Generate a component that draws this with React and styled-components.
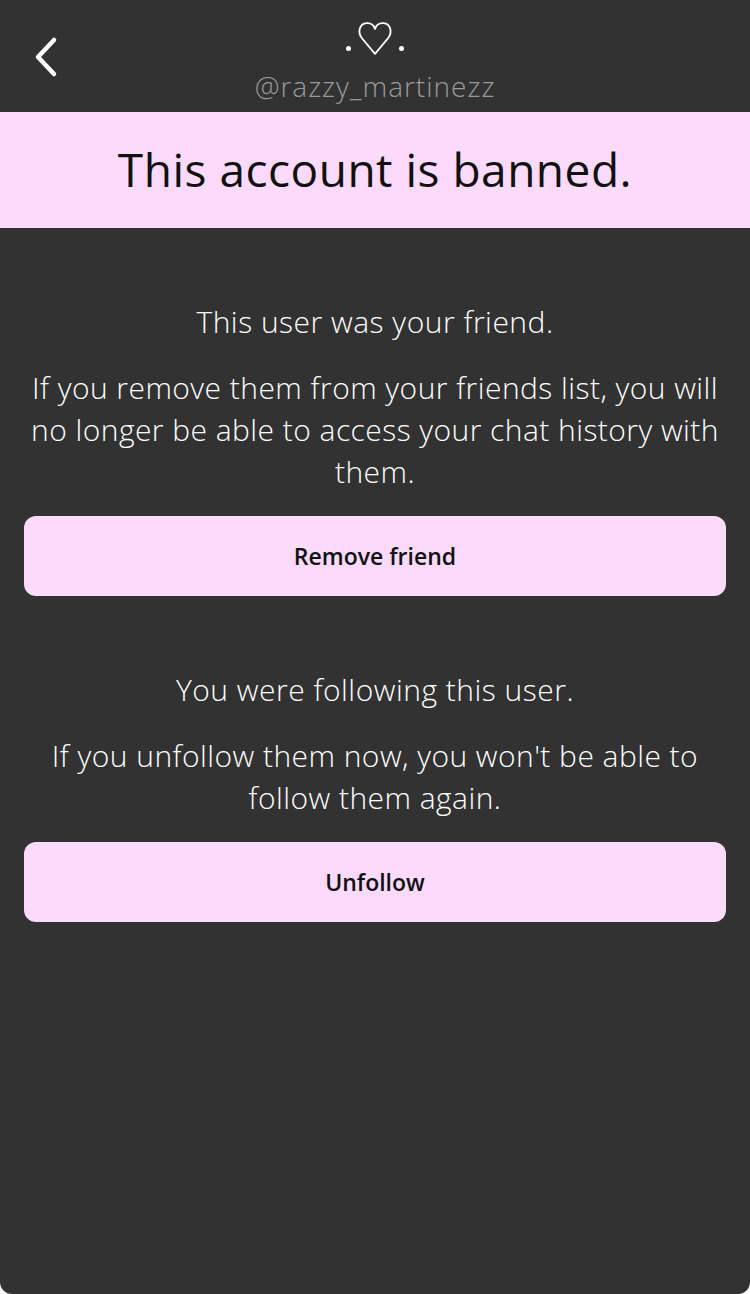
import styled, { createGlobalStyle } from "styled-components";

const GlobalStyle = createGlobalStyle`
  html, body {
    margin: 0;
    padding: 0;
    background: #ffffff;
  }
  * {
    box-sizing: border-box;
  }
`;

const Screen = styled.div`
  width: 750px;
  min-height: 1294px;
  background: #323232;
  border-radius: 0 0 12px 12px;
  font-family: "Open Sans", "Noto Sans", sans-serif;
  display: flex;
  flex-direction: column;
`;

const Header = styled.header`
  position: relative;
  height: 112px;
  display: flex;
  flex-direction: column;
  align-items: center;
  padding-top: 18px;
`;

const BackButton = styled.button`
  position: absolute;
  left: 26px;
  top: 33px;
  width: 40px;
  height: 48px;
  padding: 0;
  border: none;
  background: none;
  display: flex;
  align-items: center;
  justify-content: center;
  cursor: pointer;
`;

const Logo = styled.div`
  display: flex;
  align-items: flex-end;
  gap: 6px;
  height: 38px;
  color: #ffffff;
`;

const Dot = styled.span`
  width: 5px;
  height: 5px;
  border-radius: 50%;
  background: #ffffff;
  margin-bottom: 5px;
`;

const Username = styled.div`
  font-size: 28px;
  font-weight: 300;
  letter-spacing: 1px;
  color: #9a9a9a;
  line-height: 36px;
  margin-top: 12px;
`;

const Banner = styled.div`
  height: 116px;
  background: #fbdafc;
  display: flex;
  align-items: center;
  justify-content: center;
  font-size: 46px;
  letter-spacing: 0.5px;
  color: #111111;
  padding-bottom: 2px;
`;

const Content = styled.main`
  padding: 0 24px;
  display: flex;
  flex-direction: column;
`;

const Section = styled.section`
  padding-top: 73px;
  display: flex;
  flex-direction: column;
  align-items: center;
`;

const Title = styled.p`
  margin: 0;
  font-size: 30px;
  font-weight: 300;
  letter-spacing: 0.5px;
  line-height: 42px;
  color: #ffffff;
  text-align: center;
`;

const Body = styled.p`
  margin: 24px 0 0;
  font-size: 30px;
  font-weight: 300;
  letter-spacing: 0.45px;
  line-height: 42px;
  color: #ffffff;
  text-align: center;
`;

const ActionButton = styled.button`
  margin-top: 23px;
  width: 100%;
  height: 80px;
  border: none;
  border-radius: 12px;
  background: #fbdafc;
  color: #111111;
  font-family: inherit;
  font-size: 23px;
  font-weight: 600;
  cursor: pointer;
`;

const Chevron = () => (
  <svg width="28" height="42" viewBox="0 0 28 42" fill="none">
    <path
      d="M22 4 L6 21 L22 38"
      stroke="#ffffff"
      strokeWidth="4.5"
      strokeLinecap="round"
      strokeLinejoin="round"
    />
  </svg>
);

const Heart = () => (
  <svg width="36" height="36" viewBox="0 0 34 34" fill="none">
    <path
      d="M17 32 L4.5 17 C0.5 12 2 3.5 9 3 C13 2.7 16 5 17 8.5 C18 5 21 2.7 25 3 C32 3.5 33.5 12 29.5 17 Z"
      stroke="#ffffff"
      strokeWidth="1.7"
      strokeLinejoin="round"
    />
  </svg>
);

const sections = [
  {
    title: "This user was your friend.",
    body: "If you remove them from your friends list, you will no longer be able to access your chat history with them.",
    action: "Remove friend",
  },
  {
    title: "You were following this user.",
    body: "If you unfollow them now, you won't be able to follow them again.",
    action: "Unfollow",
  },
];

export default function App() {
  return (
    <>
      <GlobalStyle />
      <Screen>
        <Header>
          <BackButton aria-label="Back">
            <Chevron />
          </BackButton>
          <Logo>
            <Dot />
            <Heart />
            <Dot />
          </Logo>
          <Username>@razzy_martinezz</Username>
        </Header>
        <Banner>This account is banned.</Banner>
        <Content>
          {sections.map((s) => (
            <Section key={s.action}>
              <Title>{s.title}</Title>
              <Body>{s.body}</Body>
              <ActionButton>{s.action}</ActionButton>
            </Section>
          ))}
        </Content>
      </Screen>
    </>
  );
}
